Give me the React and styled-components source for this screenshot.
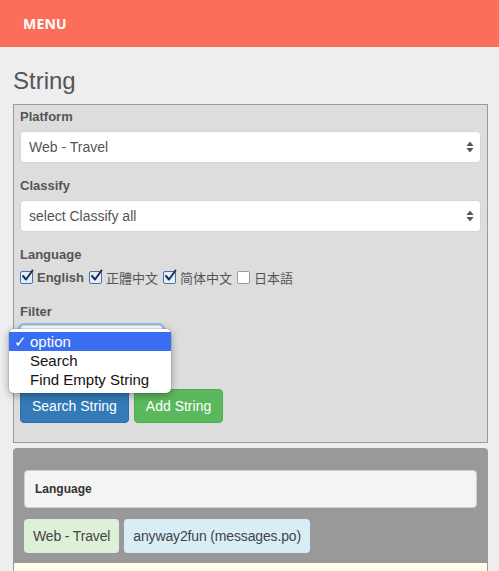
import React from "react";
import styled, { createGlobalStyle } from "styled-components";

const GlobalStyle = createGlobalStyle`
  html, body {
    margin: 0;
    padding: 0;
    background: #eeeeee;
    font-family: "Liberation Sans", Arial, sans-serif;
  }
`;

const Header = styled.div`
  height: 47px;
  background: #fa6e5a;
  display: flex;
  align-items: center;
  padding-left: 23px;
  color: #fff;
  font-family: "Open Sans", "Liberation Sans", sans-serif;
  font-weight: 700;
  font-size: 14px;
  letter-spacing: 0.2px;
`;

const Page = styled.div`
  padding: 0 11px 0 13px;
`;

const Title = styled.h1`
  margin: 0;
  padding: 21px 0 10px;
  font-size: 24px;
  font-weight: 400;
  line-height: 26px;
  color: #555;
`;

const Panel = styled.div`
  background: #dddddd;
  border: 1px solid #9a9a9a;
  padding: 3px 6px 19px;
`;

const Group = styled.div`
  margin-bottom: ${(p) => p.$gap || 14}px;
  position: relative;
`;

const Label = styled.div`
  font-size: 13px;
  font-weight: 700;
  color: #555;
  line-height: 18px;
  margin-bottom: ${(p) => p.$gap ?? 5}px;
`;

const Select = styled.div`
  height: 32px;
  box-sizing: border-box;
  background: #fff;
  border: 1px solid #d6d6d6;
  border-radius: 4px;
  display: flex;
  align-items: center;
  justify-content: space-between;
  padding: 0 6px 0 8px;
  font-size: 14px;
  color: #555;
  width: ${(p) => p.$width || "auto"};
  box-shadow: ${(p) =>
    p.$focus ? "0 0 0 2px rgba(102, 175, 233, 0.7)" : "none"};
`;

const Arrows = () => (
  <svg width="8" height="12" viewBox="0 0 8 12">
    <path d="M4 0.5 L7.5 5 L0.5 5 Z" fill="#555" />
    <path d="M4 11.5 L7.5 7 L0.5 7 Z" fill="#555" />
  </svg>
);

const CheckRow = styled.div`
  display: flex;
  align-items: center;
  height: 20px;
`;

const CheckItem = styled.label`
  display: flex;
  align-items: center;
  gap: 4px;
  margin-right: 5px;
  font-size: 13px;
  color: #555;
  font-weight: ${(p) => (p.$bold ? 700 : 400)};
  font-family: "Liberation Sans", "Noto Sans CJK TC", "Noto Sans CJK JP", sans-serif;
`;

const Box = styled.span`
  width: 11px;
  height: 11px;
  border: 1px solid ${(p) => (p.$on ? "#4a6fa8" : "#9a9a9a")};
  border-radius: 2px;
  background: ${(p) => (p.$on ? "#e3eefc" : "#fff")};
  position: relative;
  display: inline-flex;
`;

const Tick = styled.svg`
  position: absolute;
  left: 0;
  top: -3px;
`;

const Check = ({ on, children, bold }) => (
  <CheckItem $bold={bold}>
    <Box $on={on}>
      {on && (
        <Tick width="13" height="13" viewBox="0 0 13 13">
          <path
            d="M2 7 L5 10.5 L11.5 1.5"
            fill="none"
            stroke="#1f2f4f"
            strokeWidth="2"
            strokeLinecap="round"
            strokeLinejoin="round"
          />
        </Tick>
      )}
    </Box>
    {children}
  </CheckItem>
);

const Menu = styled.div`
  position: absolute;
  left: -11px;
  top: 26px;
  width: 162px;
  box-sizing: border-box;
  padding: 3px 0 4px;
  background: #fff;
  border-radius: 5px;
  box-shadow: 0 2px 8px rgba(0, 0, 0, 0.35), 0 0 0 1px rgba(0, 0, 0, 0.08);
  font-size: 15px;
  z-index: 2;
`;

const MenuItem = styled.div`
  height: 19px;
  line-height: 19px;
  padding-left: 21px;
  position: relative;
  color: ${(p) => (p.$active ? "#fff" : "#111")};
  background: ${(p) => (p.$active ? "#3a6ef2" : "transparent")};
`;

const Mark = styled.span`
  position: absolute;
  left: 5px;
`;

const Buttons = styled.div`
  display: flex;
  gap: 5px;
`;

const Button = styled.button`
  height: 34px;
  padding: 0 11px;
  border-radius: 4px;
  border: 1px solid ${(p) => (p.$variant === "green" ? "#4cae4c" : "#2e6da4")};
  background: ${(p) => (p.$variant === "green" ? "#5cb85c" : "#337ab7")};
  color: #fff;
  font-family: "Liberation Sans", Arial, sans-serif;
  font-size: 14px;
  cursor: pointer;
`;

const Result = styled.div`
  margin-top: 5px;
  background: #999999;
  border-radius: 4px 4px 0 0;
  padding: 22px 11px 0;
`;

const Caption = styled.div`
  height: 38px;
  box-sizing: border-box;
  background: #f4f4f4;
  border: 1px solid #cfcfcf;
  border-radius: 4px;
  padding: 0 10px;
  display: flex;
  align-items: center;
  font-size: 12px;
  font-weight: 700;
  color: #333;
`;

const Tags = styled.div`
  display: flex;
  gap: 5px;
  margin-top: 11px;
`;

const Tag = styled.span`
  height: 34px;
  display: inline-flex;
  align-items: center;
  padding: 0 9px;
  border-radius: 4px;
  font-size: 14px;
  color: #444;
  letter-spacing: -0.15px;
  background: ${(p) => (p.$tone === "info" ? "#d9edf7" : "#dff0d8")};
`;

const Body = styled.div`
  margin: 10px -10px 0;
  height: 20px;
  background: #fefeea;
`;

export default function App() {
  return (
    <>
      <GlobalStyle />
      <Header>MENU</Header>
      <Page>
        <Title>String</Title>
        <Panel>
          <Group>
            <Label>Platform</Label>
            <Select>
              Web - Travel
              <Arrows />
            </Select>
          </Group>
          <Group>
            <Label>Classify</Label>
            <Select>
              select Classify all
              <Arrows />
            </Select>
          </Group>
          <Group $gap={16}>
            <Label $gap={3}>Language</Label>
            <CheckRow>
              <Check on bold>English</Check>
              <Check on>正體中文</Check>
              <Check on>简体中文</Check>
              <Check>日本語</Check>
            </CheckRow>
          </Group>
          <Group $gap={32}>
            <Label $gap={4}>Filter</Label>
            <Select $width="143px" $focus />
            <Menu>
              <MenuItem $active>
                <Mark>✓</Mark>option
              </MenuItem>
              <MenuItem>Search</MenuItem>
              <MenuItem>Find Empty String</MenuItem>
            </Menu>
          </Group>
          <Buttons>
            <Button>Search String</Button>
            <Button $variant="green">Add String</Button>
          </Buttons>
        </Panel>
        <Result>
          <Caption>Language</Caption>
          <Tags>
            <Tag>Web - Travel</Tag>
            <Tag $tone="info">anyway2fun (messages.po)</Tag>
          </Tags>
          <Body />
        </Result>
      </Page>
    </>
  );
}
